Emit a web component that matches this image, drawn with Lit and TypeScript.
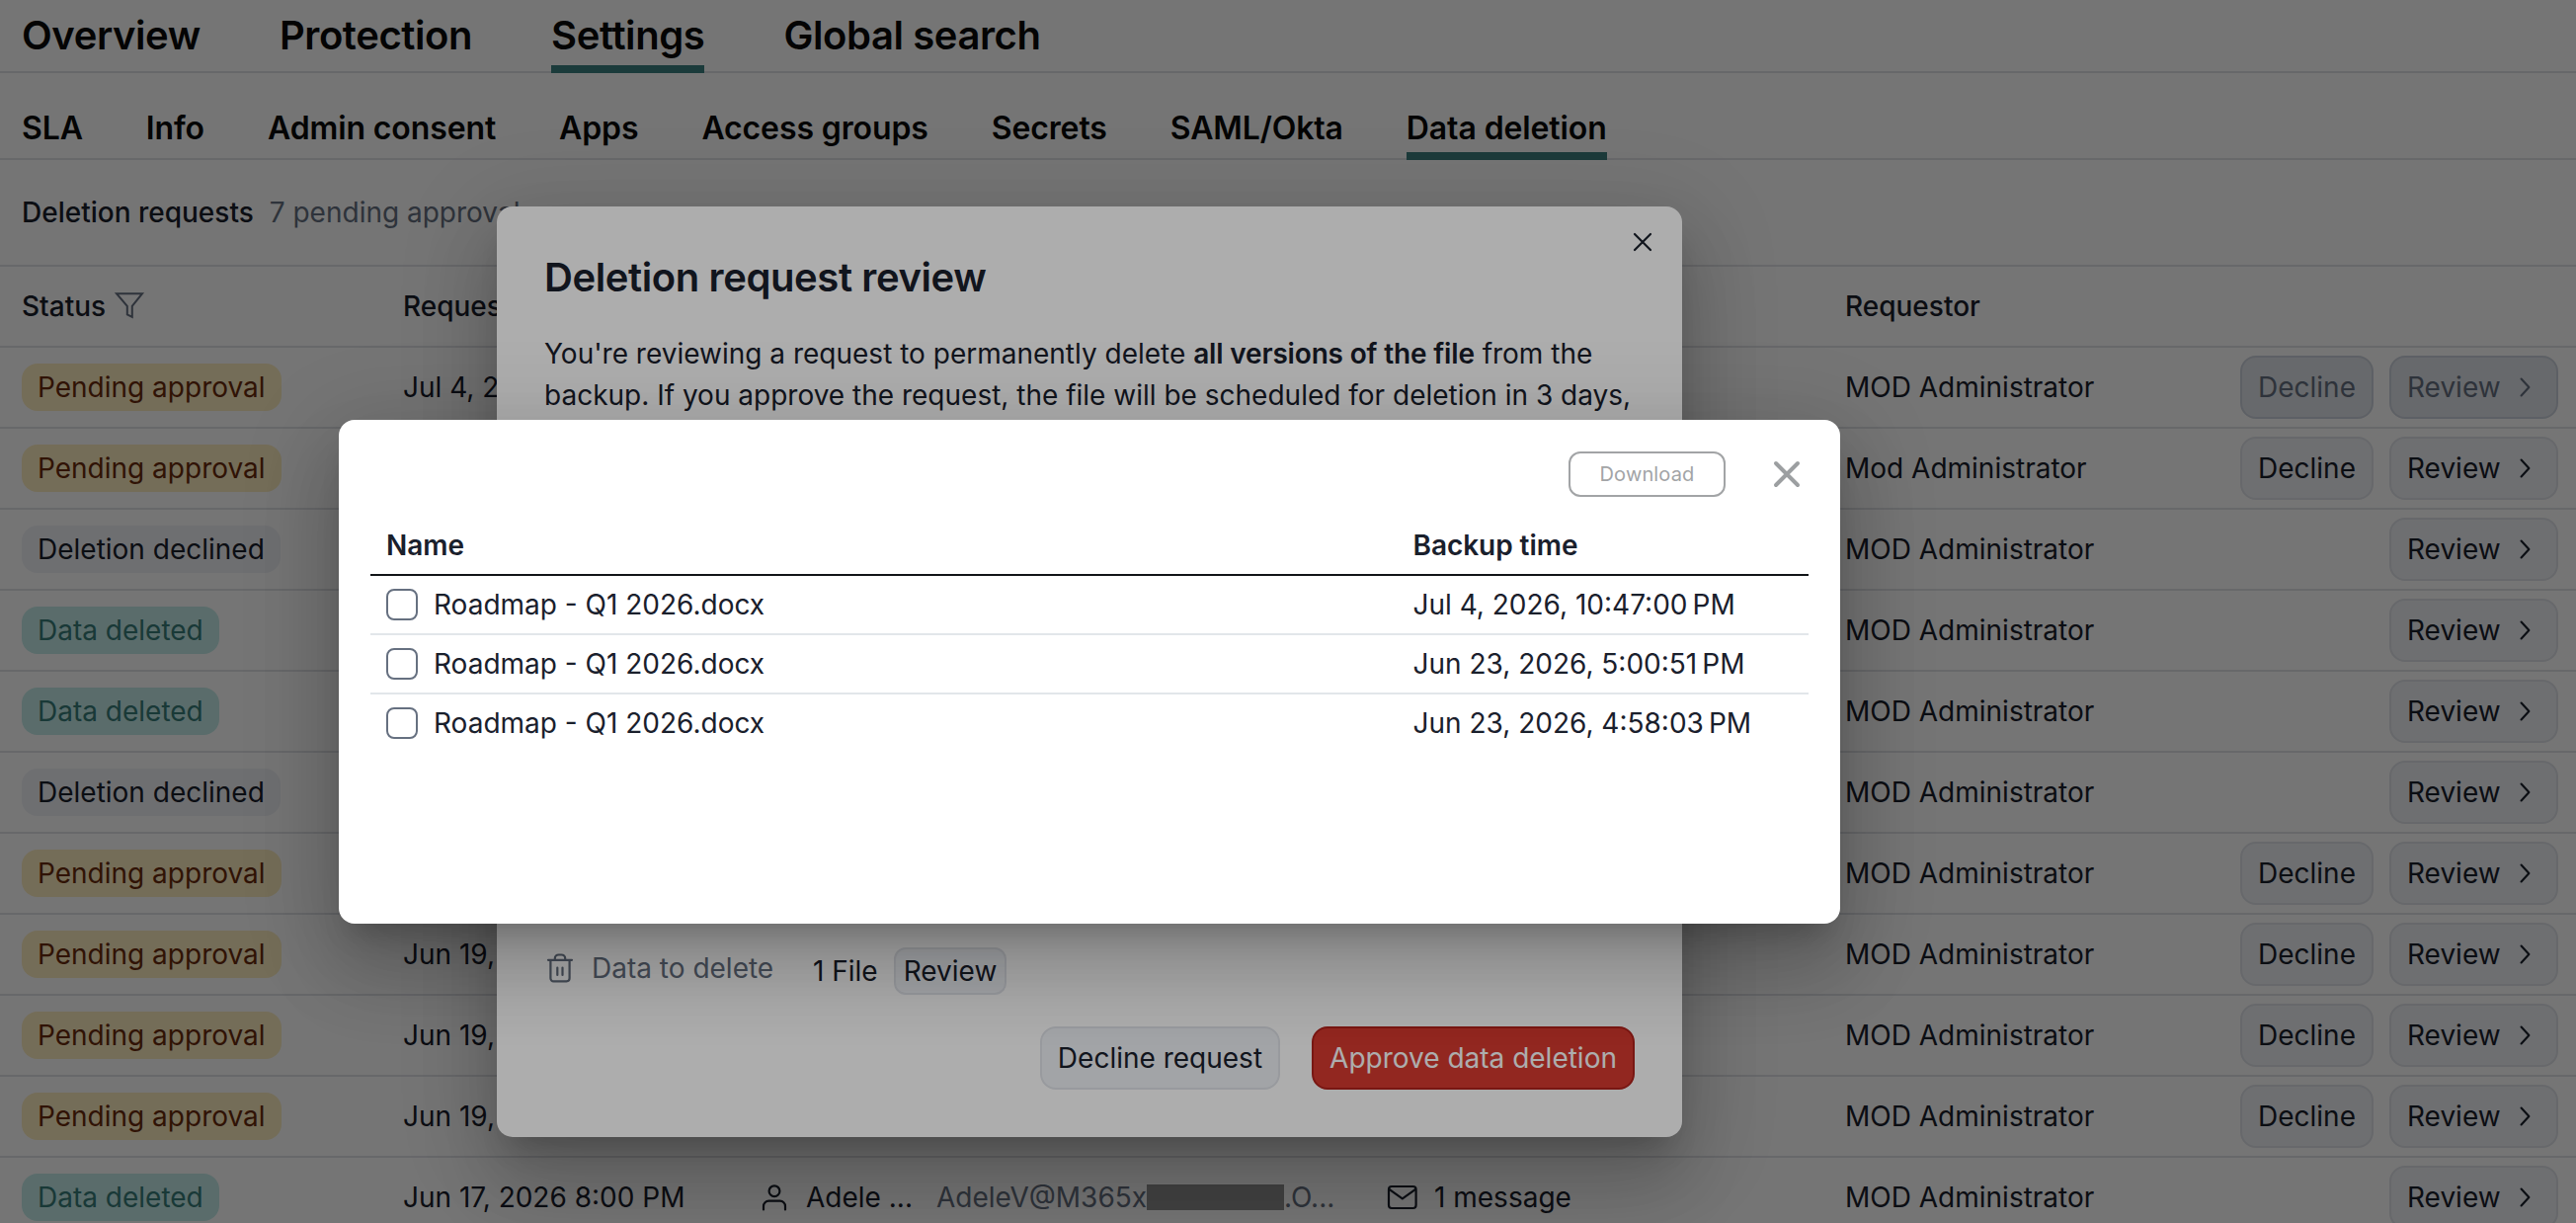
import { LitElement, html, css, svg } from "lit";
import { customElement } from "lit/decorators.js";

type Kind = "pending" | "declined" | "deleted";
const LABEL: Record<Kind, string> = {
  pending: "Pending approval",
  declined: "Deletion declined",
  deleted: "Data deleted",
};
interface Row { kind: Kind; date?: string; who?: string; disabled?: boolean; full?: boolean }

const ROWS: Row[] = [
  { kind: "pending", date: "Jul 4, 2026", disabled: true },
  { kind: "pending", who: "Mod Administrator" },
  { kind: "declined" },
  { kind: "deleted" },
  { kind: "deleted" },
  { kind: "declined" },
  { kind: "pending" },
  { kind: "pending", date: "Jun 19, 2026" },
  { kind: "pending", date: "Jun 19, 2026" },
  { kind: "pending", date: "Jun 19, 2026" },
  { kind: "deleted", date: "Jun 17, 2026 8:00 PM", full: true },
];

const VERSIONS = [
  "Jul 4, 2026, 10:47:00\u202fPM",
  "Jun 23, 2026, 5:00:51\u202fPM",
  "Jun 23, 2026, 4:58:03\u202fPM",
];

const icon = (size: number, body: unknown, cls = "") =>
  html`<svg class="icon ${cls}" width=${size} height=${size} viewBox="0 0 32 32">${body}</svg>`;

const filterIcon = icon(32, svg`<path d="M3 3.200H29L18.800 15.800V26.800L13.800 24.300V15.800Z"/>`, "muted sharp");
const chevron = icon(20, svg`<path d="M10.500 2.500 23 16 10.500 29.500"/>`, "chev");
const userIcon = icon(32, svg`<circle cx="16" cy="9.700" r="5.400"/><path d="M5 28.500v-3.500a5.300 5.300 0 0 1 5.300-5.300h11.400a5.300 5.300 0 0 1 5.300 5.300v3.500"/>`);
const mailIcon = icon(32, svg`<rect x="2" y="5" width="27.600" height="22" rx="3"/><path d="M2.800 8.200 15.800 17.300 28.800 8.200"/>`);
const trashIcon = icon(32, svg`<path d="M4 7.800h24M6.400 7.800v18.500a3 3 0 0 0 3 3h13.200a3 3 0 0 0 3-3V7.800M10.800 7.800V6.200a3.700 3.700 0 0 1 3.700-3.700h3a3.700 3.700 0 0 1 3.700 3.700v1.600M13.300 15.500v7.500M18.500 15.500v7.500"/>`, "muted");

@customElement("app-root")
export class AppRoot extends LitElement {
  static styles = css`
    :host {
      display: block;
      position: relative;
      width: 2608px;
      height: 1238px;
      overflow: hidden;
      background: #fff;
      color: #1a202c;
      font: 400 28px/42px Inter, "Liberation Sans", sans-serif;
    }
    * { box-sizing: border-box; }
    .tabs {
      display: flex;
      padding-left: 22px;
      border-bottom: 2px solid #e2e4e7;
      color: #0a0a0a;
      font-weight: 600;
      white-space: nowrap;
    }
    .tab { margin-bottom: -2px; border-bottom: 8px solid transparent; }
    .tab.active { border-color: #3d8080; }
    .main { height: 74px; gap: 80px; font-size: 40px; line-height: 72px; letter-spacing: -0.41px; }
    .main .tab { height: 74px; }
    .sub { height: 88px; gap: 64px; font-size: 32px; line-height: 112px; letter-spacing: -0.12px; }
    .sub .tab { height: 88px; }
    .title {
      display: flex;
      gap: 16px;
      height: 108px;
      padding-left: 22px;
      border-bottom: 2px solid #e2e4e7;
      line-height: 106px;
    }
    .strong { font-weight: 500; }
    .dim { color: #667080; }
    .row {
      display: grid;
      grid-template-columns: 386px 360px 636px 464px 360px 1fr;
      align-items: center;
      height: 82px;
      padding: 0 18px 0 22px;
      border-bottom: 2px solid #e2e4e7;
      white-space: nowrap;
    }
    .row.head { font-weight: 500; }
    .cell { display: flex; align-items: center; }
    .head .cell { gap: 8px; }
    .badge {
      height: 48px;
      padding: 0 16px;
      border-radius: 16px;
      line-height: 48px;
    }
    .pending { background: #fdedc0; color: #6b2c0c; }
    .declined { background: #f0f2f7; }
    .deleted { background: #c4ece9; color: #387c7a; }
    .actions { display: flex; justify-content: flex-end; gap: 16px; }
    .btn {
      display: flex;
      align-items: center;
      height: 64px;
      padding: 0 16px;
      border: 2px solid #e0e3e9;
      border-radius: 16px;
      background: #eff2f6;
    }
    .review { width: 171px; gap: 14px; }
    .off { border-color: #ccd2dc; background: #e2e5ea; color: #667080; }
    .icon {
      flex: none;
      fill: none;
      stroke: currentColor;
      stroke-width: 2.200;
      stroke-linecap: round;
      stroke-linejoin: round;
    }
    .icon.muted { color: #667080; }
    .icon.sharp { stroke-linejoin: miter; stroke-width: 2; }
    .icon.chev { stroke-width: 3.400; }
    .name { margin: 0 24px 0 16px; }
    .mail { display: flex; align-items: center; color: #667080; }
    .mask { width: 139px; height: 26px; background: #919191; }
    .count { margin-left: 16px; }
    .overlay { position: absolute; inset: 0; background: rgba(0, 0, 0, 0.32); }
    .dialog {
      position: absolute;
      display: flex;
      flex-direction: column;
      border-radius: 16px;
      background: #fff;
      box-shadow:
        0 22px 30px -14px rgba(0, 0, 0, 0.2),
        0 48px 76px 6px rgba(0, 0, 0, 0.14),
        0 18px 92px 16px rgba(0, 0, 0, 0.12);
    }
    .request { left: 503px; top: 209px; width: 1200px; height: 942px; padding: 48px; }
    .request h2 { margin: 0; font-size: 40px; line-height: 48px; font-weight: 600; letter-spacing: -0.4px; }
    .request p { margin: 32px 0 0; width: 1110px; line-height: 42px; }
    .request b { font-weight: 600; letter-spacing: -0.17px; }
    .close { position: absolute; }
    .request .close { right: 30px; top: 26px; }
    .data { display: flex; align-items: center; height: 48px; margin-top: auto; }
    .what { display: flex; align-items: center; gap: 16px; width: 272px; padding-bottom: 6px; }
    .num { margin-right: 16px; }
    .mini { height: 48px; padding: 0 8px; border-radius: 12px; }
    .foot { display: flex; justify-content: flex-end; gap: 32px; margin-top: 32px; }
    .danger { background: #d83a30; border-color: #b3221c; color: #fff; }
    .versions { left: 343px; top: 425px; width: 1520px; height: 510px; padding: 32px; }
    .tools { display: flex; justify-content: flex-end; align-items: center; gap: 48px; padding-right: 8px; height: 46px; }
    .download {
      width: 159px;
      height: 46px;
      border: 2px solid #a2a4a6;
      border-radius: 12px;
      color: #a2a4a6;
      font-size: 20px;
      line-height: 42px;
      text-align: center;
      letter-spacing: 0.15px;
    }
    .icon.cross { color: #9c9fa1; stroke-width: 4; }
    .line {
      display: grid;
      grid-template-columns: 1039.5px 1fr;
      align-items: center;
      height: 60px;
      padding-left: 16px;
      border-bottom: 2px solid #e2e6ea;
    }
    .line:last-child { border-color: transparent; }
    .line.top {
      height: 56px;
      margin-top: 24px;
      padding-bottom: 4px;
      border-color: #111418;
      font-weight: 600;
      letter-spacing: -0.05px;
    }
    .file { display: flex; align-items: center; gap: 16px; }
    .box { width: 32px; height: 32px; border: 2px solid #667080; border-radius: 8px; }
  `;

  private row(r: Row) {
    return html`<div class="row">
      <div class="cell"><span class="badge ${r.kind}">${LABEL[r.kind]}</span></div>
      <div class="cell">${r.date ?? ""}</div>
      <div class="cell">${r.full
        ? html`${userIcon}<span class="name">Adele ...</span><span class="mail">AdeleV@M365x<i class="mask"></i>.O...</span>`
        : ""}</div>
      <div class="cell">${r.full ? html`${mailIcon}<span class="count">1 message</span>` : ""}</div>
      <div>${r.who ?? "MOD Administrator"}</div>
      <div class="actions">
        ${r.kind === "pending" ? html`<span class="btn ${r.disabled ? "off" : ""}">Decline</span>` : ""}
        <span class="btn review ${r.disabled ? "off" : ""}">Review ${chevron}</span>
      </div>
    </div>`;
  }

  render() {
    const main = ["Overview", "Protection", "Settings", "Global search"];
    const sub = ["SLA", "Info", "Admin consent", "Apps", "Access groups", "Secrets", "SAML/Okta", "Data deletion"];
    const tab = (t: string, on: string) => html`<span class="tab ${t === on ? "active" : ""}">${t}</span>`;
    return html`
      <nav class="tabs main">${main.map((t) => tab(t, "Settings"))}</nav>
      <nav class="tabs sub">${sub.map((t) => tab(t, "Data deletion"))}</nav>
      <div class="title"><span class="strong">Deletion requests</span><span class="dim">7 pending approval</span></div>
      <div class="row head">
        <div class="cell">Status ${filterIcon}</div>
        <div class="cell">Requested</div>
        <div></div>
        <div></div>
        <div>Requestor</div>
      </div>
      ${ROWS.map((r) => this.row(r))}

      <div class="overlay"></div>
      <section class="dialog request">
        <svg class="icon close" width="20" height="20" viewBox="0 0 20 20"><path d="M2 2 18 18M18 2 2 18"/></svg>
        <h2>Deletion request review</h2>
        <p>You're reviewing a request to permanently delete <b>all versions of the file</b> from the backup. If you approve the request, the file will be scheduled for deletion in 3 days,</p>
        <div class="data">
          <span class="what dim">${trashIcon}Data to delete</span><span class="num">1 File</span><span class="btn mini">Review</span>
        </div>
        <div class="foot"><span class="btn">Decline request</span><span class="btn danger">Approve data deletion</span></div>
      </section>

      <div class="overlay"></div>
      <section class="dialog versions">
        <div class="tools">
          <span class="download">Download</span>
          <svg class="icon cross" width="28" height="28" viewBox="0 0 28 28"><path d="M3 3 25 25M25 3 3 25"/></svg>
        </div>
        <div class="line top"><span>Name</span><span>Backup time</span></div>
        ${VERSIONS.map((v) => html`<div class="line"><span class="file"><i class="box"></i>Roadmap - Q1 2026.docx</span><span>${v}</span></div>`)}
      </section>
    `;
  }
}
